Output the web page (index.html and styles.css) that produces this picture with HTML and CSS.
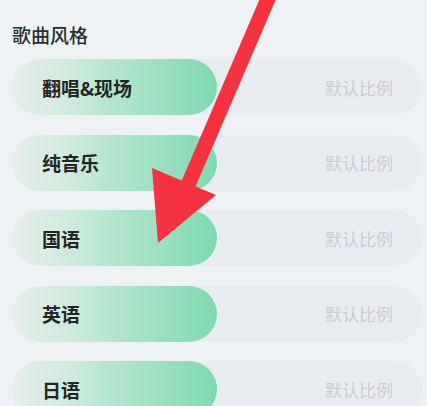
FILE: index.html
```html
<!DOCTYPE html>
<html lang="zh">
<head>
<meta charset="utf-8">
<link rel="stylesheet" href="styles.css">
</head>
<body>
<div class="page">
  <h2 class="title">歌曲风格</h2>
  <div class="list">
    <div class="row"><div class="pill">翻唱&amp;现场</div><span class="ratio">默认比例</span></div>
    <div class="row"><div class="pill">纯音乐</div><span class="ratio">默认比例</span></div>
    <div class="row"><div class="pill">国语</div><span class="ratio">默认比例</span></div>
    <div class="row"><div class="pill">英语</div><span class="ratio">默认比例</span></div>
    <div class="row"><div class="pill">日语</div><span class="ratio">默认比例</span></div>
  </div>
  <svg class="arrow" width="427" height="406" viewBox="0 0 427 406">
    <line x1="270" y1="-6" x2="188" y2="185" stroke="#f5323f" stroke-width="15" />
    <polygon points="152,168 216,195 158,243" fill="#f5323f" />
  </svg>
</div>
</body>
</html>
```

FILE: styles.css
```css
html, body {
  margin: 0;
  padding: 0;
  background: #eef2f5;
  overflow: hidden;
}
.page {
  position: relative;
  width: 427px;
  height: 406px;
  padding: 23px 5px 0 12px;
  box-sizing: border-box;
  font-family: "Noto Sans CJK SC", "Noto Sans", sans-serif;
}
.title {
  margin: 0;
  font-size: 19px;
  line-height: 24px;
  font-weight: 500;
  color: #2a2f31;
}
.list {
  margin-top: 12px;
  display: flex;
  flex-direction: column;
  gap: 19.5px;
}
.row {
  height: 56px;
  flex: none;
  border-radius: 28px;
  background: #e9ecf0;
  display: flex;
  align-items: center;
  justify-content: space-between;
  padding-right: 29px;
}
.pill {
  width: 205px;
  height: 56px;
  border-radius: 28px;
  box-sizing: border-box;
  padding-left: 30px;
  display: flex;
  align-items: center;
  font-size: 19px;
  font-weight: 700;
  color: #1e2626;
  background: linear-gradient(90deg, #e6eeec 0%, #d2ebdf 25%, #b3e5cd 50%, #96dfbe 78%, #7ddab0 100%);
}
.ratio {
  font-size: 17px;
  color: #c9cdd2;
}
.arrow {
  position: absolute;
  left: 0;
  top: 0;
  pointer-events: none;
}
```
